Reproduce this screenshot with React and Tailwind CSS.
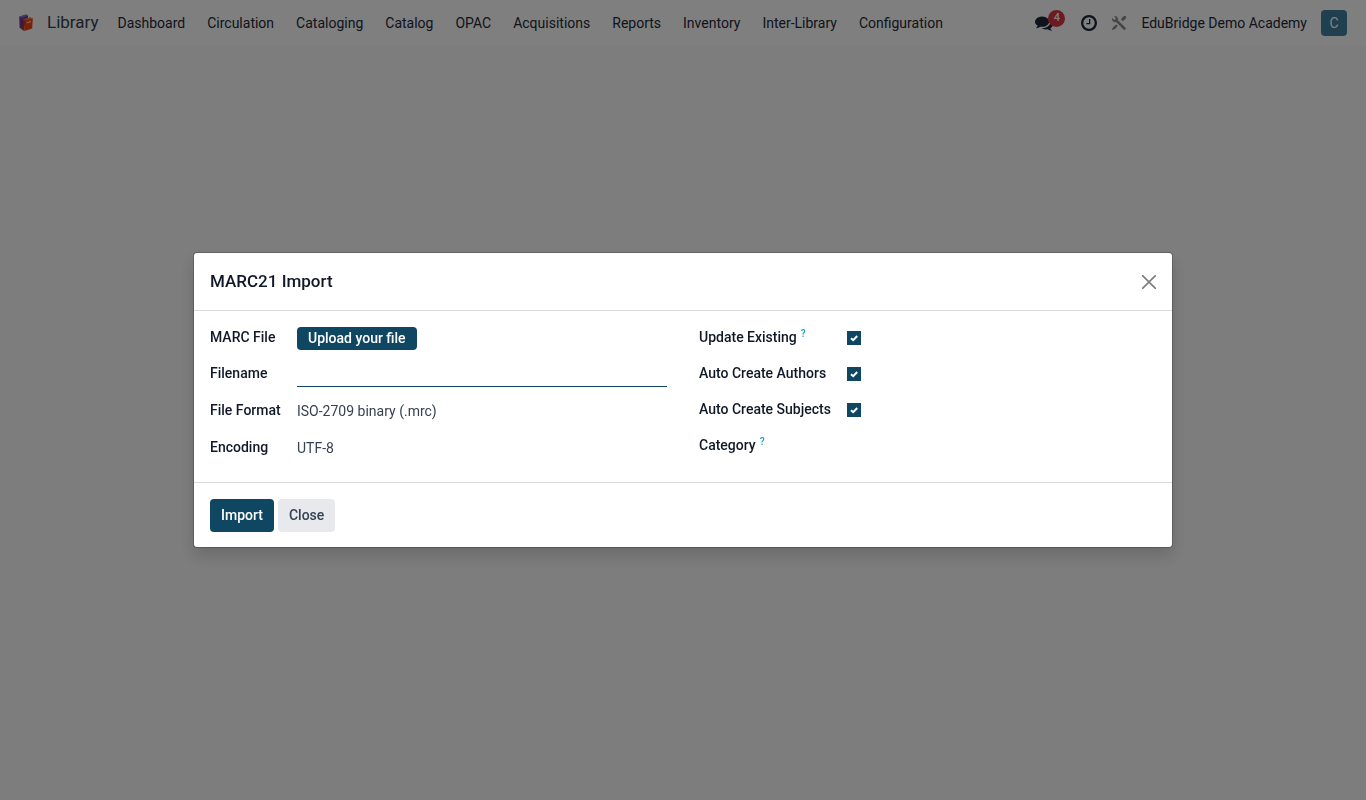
import React, { useState } from 'react';

const MENU_ITEMS = [
  'Dashboard',
  'Circulation',
  'Cataloging',
  'Catalog',
  'OPAC',
  'Acquisitions',
  'Reports',
  'Inventory',
  'Inter-Library',
  'Configuration',
];

function BooksIcon() {
  return (
    <svg viewBox="0 0 16 18" className="w-4 h-[18px]" aria-hidden="true">
      <path d="M1.2 2.8 8 .6l2 1v3L5 15 1.6 14z" fill="#6f3cb0" />
      <path d="M1.2 2.8 8 .6l2 1-6.4 2.3z" fill="#8d6cc4" />
      <path d="M3.4 4.6 4.6 4v12.4L3.4 15z" fill="#5a2f98" />
      <path d="M4.4 5.6 12 3.2l2.8 1L7 6.8z" fill="#f0703a" />
      <path d="M4.4 5.6 7 6.8 6.4 17l-2-1.2z" fill="#b8340c" />
      <path d="M7 6.8l7.8-2.6-.6 10.2L6.4 17z" fill="#f5400c" />
      <path d="M8.6 8.2 13 6.8v1.4L8.6 9.6z" fill="#ffc9a0" />
    </svg>
  );
}

function CommentsIcon() {
  return (
    <svg viewBox="0 0 1792 1792" className="w-[18px] h-[18px]" fill="currentColor" aria-hidden="true">
      <path d="M1408 768q0 139-94 257t-256.5 186.5-353.5 68.5q-86 0-176-16-124 88-278 128-36 9-86 16h-3q-11 0-20.5-8t-11.5-21q-1-3-1-6.5t.5-6.5 2-6l2.5-5 3.5-5.5 4-5 4.5-5 4-4.5q5-6 23-25t26-29.5 22.5-29 25-38.5 20.5-44q-124-72-195-177t-71-224q0-139 94-257t256.5-186.5 353.5-68.5 353.5 68.5 256.5 186.5 94 257zm384 256q0 120-71 224.5t-195 176.5q10 24 20.5 44t25 38.5 22.5 29 26 29.5 23 25q1 1 4 4.5t4.5 5 4 5 3.5 5.5l2.5 5 2 6 .5 6.5-1 6.5q-3 14-13 22t-22 7q-50-7-86-16-154-40-278-128-90 16-176 16-271 0-472-132 58 4 88 4 161 0 309-45t264-129q125-92 192-212t67-254q0-77-23-152 129 71 204 178t75 230z" />
    </svg>
  );
}

function ClockIcon() {
  return (
    <svg viewBox="0 128 1536 1536" className="w-4 h-4" fill="currentColor" aria-hidden="true">
      <path d="M896 544v448q0 14-9 23t-23 9h-320q-14 0-23-9t-9-23v-64q0-14 9-23t23-9h224v-352q0-14 9-23t23-9h64q14 0 23 9t9 23zm416 352q0-148-73-273t-198-198-273-73-273 73-198 198-73 273 73 273 198 198 273 73 273-73 198-198 73-273zm224 0q0 209-103 385.5t-279.5 279.5-385.5 103-385.5-103-279.5-279.5-103-385.5 103-385.5 279.5-279.5 385.5-103 385.5 103 279.5 279.5 103 385.5z" />
    </svg>
  );
}

// wrench from the top left, screwdriver with its handle at the top right
function ToolsIcon() {
  return (
    <svg viewBox="0 0 16 16" className="w-4 h-4" fill="#888c93" aria-hidden="true">
      <path d="M2.9 1.1A3.3 3.3 0 0 1 6.9 5.3L14.4 12.6a1.3 1.3 0 0 1-1.9 1.9L5.1 7A3.3 3.3 0 0 1 1 3L3 4.8l1.5-.3.3-1.5z" />
      <path d="M14.7 1.2a1.5 1.5 0 0 1 .1 2.2L11.9 6.3 9.8 4.2l2.8-2.9a1.5 1.5 0 0 1 2.1-.1z" />
      <path d="M5.5 9.4l1.3 1.3-2.6 3.2-2.8 1.2-.5-.5 1.3-2.6z" />
    </svg>
  );
}

function Navbar() {
  return (
    <header className="flex items-center justify-between h-[46px] pl-[18px] pr-[19px] bg-white text-gray-800">
      <div className="flex items-center">
        <BooksIcon />
        <a href="#library" className="ml-[13px] mr-2 text-[17px] text-gray-700">Library</a>
        <nav className="flex">
          {MENU_ITEMS.map((item) => (
            <a key={item} href="#menu" className="px-[11px] text-sm">
              {item}
            </a>
          ))}
        </nav>
      </div>

      <div className="flex items-center">
        <button type="button" title="Messages" className="relative mr-7">
          <CommentsIcon />
          <span className="absolute -top-1 left-[13px] flex items-center justify-center w-[17px] h-[17px] rounded-full bg-[#dc3545] text-white text-[11px] font-medium">
            4
          </span>
        </button>
        <button type="button" title="Activities" className="mr-[14px]">
          <ClockIcon />
        </button>
        <button type="button" title="Developer tools" className="mr-[14px]">
          <ToolsIcon />
        </button>
        <span className="text-sm">EduBridge Demo Academy</span>
        <button type="button" title="User menu" className="ml-[14px] w-[26px] h-[26px] rounded-sm bg-[#417f9e] text-white text-sm">
          C
        </button>
      </div>
    </header>
  );
}

function Help() {
  return <sup className="ml-1 text-[10px] font-medium text-[#17a2b8]">?</sup>;
}

function CheckField({ id, label, help, checked, onChange }) {
  return (
    <div className="flex h-9">
      <label htmlFor={id} className="w-[148px] font-medium text-gray-900">
        {label}
        {help && <Help />}
      </label>
      <span className="relative mt-1 w-[14px] h-[14px]">
        <input
          id={id}
          type="checkbox"
          checked={checked}
          onChange={(e) => onChange(e.target.checked)}
          className="block appearance-none w-[14px] h-[14px] border border-[#0f4763] bg-white checked:bg-[#0f4763]"
        />
        {checked && (
          <svg viewBox="0 0 14 14" className="absolute inset-0 w-[14px] h-[14px] pointer-events-none" fill="none" aria-hidden="true">
            <path d="M4 7.2 6.2 9.2 10.2 5" stroke="#fff" strokeWidth="2" />
          </svg>
        )}
      </span>
    </div>
  );
}

function ImportDialog() {
  const [filename, setFilename] = useState('');
  const [updateExisting, setUpdateExisting] = useState(true);
  const [createAuthors, setCreateAuthors] = useState(true);
  const [createSubjects, setCreateSubjects] = useState(true);

  return (
    <div
      role="dialog"
      aria-labelledby="dialog-title"
      className="w-full max-w-[980px] bg-white border border-black/20 bg-clip-padding rounded-sm shadow-[0_8px_16px_rgba(0,0,0,0.15)]"
    >
      <div className="flex items-center justify-between h-[58px] px-4 border-b border-[#d8dadd]">
        <h4 id="dialog-title" className="text-[17px] font-medium text-gray-900">MARC21 Import</h4>
        <button type="button" title="Close dialog" className="text-[#7c7c7c]">
          <svg viewBox="0 0 14 14" className="w-[14px] h-[14px]" aria-hidden="true">
            <path d="M.5.5l13 13M13.5.5l-13 13" stroke="currentColor" strokeWidth="1.6" strokeLinecap="round" />
          </svg>
        </button>
      </div>

      <div className="grid grid-cols-2 gap-x-8 px-4 pt-4 pb-2 text-sm leading-[21px]">
        {/* file settings */}
        <div>
          <div className="flex h-9">
            <label htmlFor="marc-file" className="w-[87px] font-medium text-gray-900">MARC File</label>
            <button id="marc-file" type="button" className="h-[23px] px-[11px] rounded-sm bg-[#0f4763] text-white font-medium">
              Upload your file
            </button>
          </div>
          <div className="flex h-[37px]">
            <label htmlFor="filename" className="w-[87px] font-medium text-gray-900">Filename</label>
            <input
              id="filename"
              type="text"
              value={filename}
              onChange={(e) => setFilename(e.target.value)}
              className="flex-1 h-6 border-b border-[#0f4763] text-gray-700 outline-none"
            />
          </div>
          <div className="flex h-[37px]">
            <label htmlFor="file-format" className="w-[87px] font-medium text-gray-900">File Format</label>
            <select id="file-format" className="flex-1 h-[22px] appearance-none text-gray-700">
              <option>ISO-2709 binary (.mrc)</option>
            </select>
          </div>
          <div className="flex h-[37px]">
            <label htmlFor="encoding" className="w-[87px] font-medium text-gray-900">Encoding</label>
            <select id="encoding" className="flex-1 h-[22px] appearance-none text-gray-700">
              <option>UTF-8</option>
            </select>
          </div>
        </div>

        {/* record options */}
        <div>
          <CheckField id="update-existing" label="Update Existing" help checked={updateExisting} onChange={setUpdateExisting} />
          <CheckField id="create-authors" label="Auto Create Authors" checked={createAuthors} onChange={setCreateAuthors} />
          <CheckField id="create-subjects" label="Auto Create Subjects" checked={createSubjects} onChange={setCreateSubjects} />
          <div className="flex h-9">
            <label htmlFor="category" className="w-[148px] font-medium text-gray-900">
              Category
              <Help />
            </label>
            <input id="category" type="text" className="flex-1 h-6 text-gray-700 outline-none" />
          </div>
        </div>
      </div>

      <div className="flex gap-1 px-4 pt-4 pb-[15px] border-t border-[#d8dadd] text-sm leading-[21px] font-medium">
        <button type="button" className="h-[33px] px-[11px] rounded-sm bg-[#0f4763] text-white">Import</button>
        <button type="button" className="h-[33px] px-[11px] rounded-sm bg-[#e7e9ed] text-gray-700">Close</button>
      </div>
    </div>
  );
}

export default function App() {
  return (
    <div className="min-h-screen bg-[#fafafa] font-[Roboto,sans-serif]">
      <Navbar />
      <div className="fixed inset-0 flex items-center justify-center bg-black/50">
        <ImportDialog />
      </div>
    </div>
  );
}
